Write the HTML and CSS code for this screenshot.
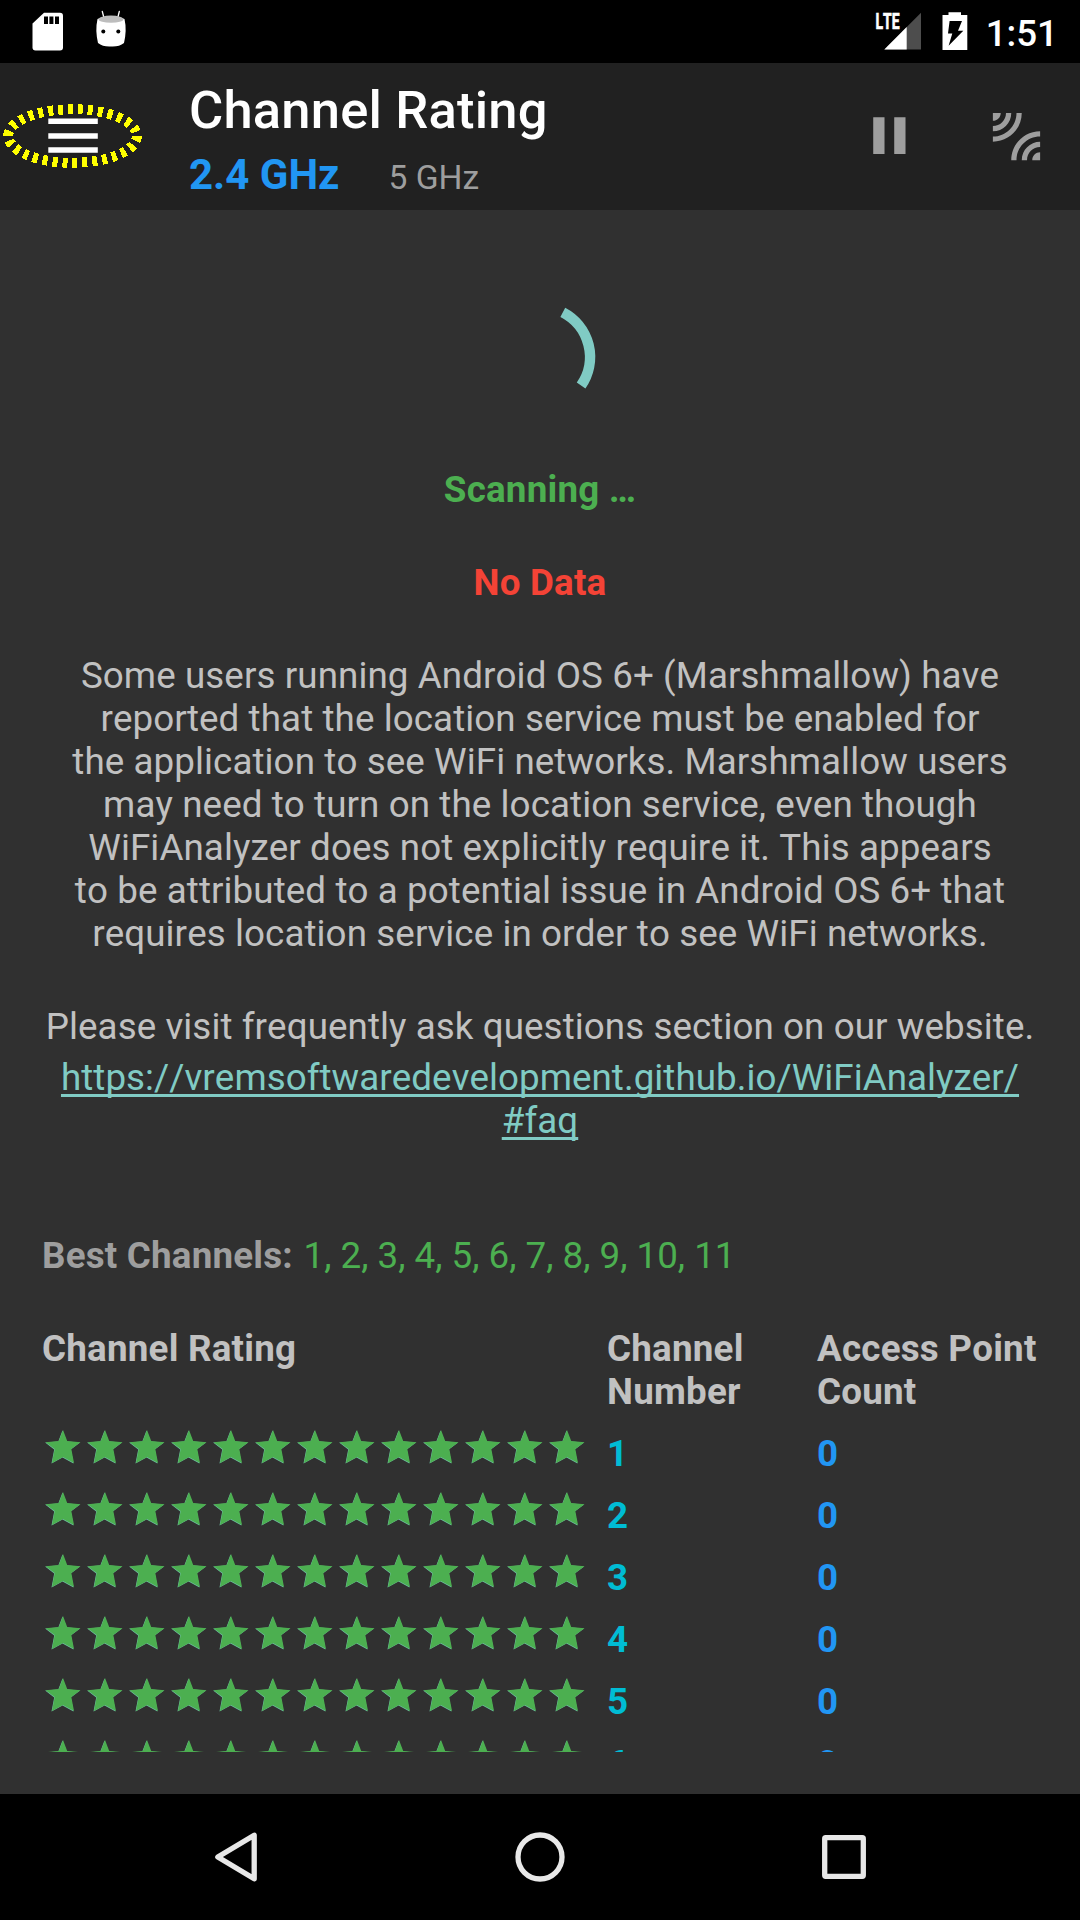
FILE: index.html
```html
<!DOCTYPE html>
<html lang="en">
<head>
<meta charset="utf-8">
<title>Channel Rating</title>
<link rel="stylesheet" href="styles.css">
</head>
<body>
<svg class="defs" width="0" height="0" aria-hidden="true">
  <defs>
    <path id="star-shape" d="M21 5L25.2 16L38.5 17.2L29.3 24L32 38L21 32L10 38L12.7 24L3.6 17.2L16.8 16Z"/>
    <pattern id="star" width="42" height="42" patternUnits="userSpaceOnUse">
      <use href="#star-shape" x="-0.5" y="0.4" fill="#6cc0a4"/>
      <use href="#star-shape" fill="#4caf50"/>
    </pattern>
  </defs>
</svg>
<div class="screen">
  <header class="status-bar">
    <div class="status-left">
      <svg width="32" height="40" viewBox="0 0 32 40">
        <path fill="#fff" d="M12 .7H28Q31 .7 31 3.700V35.500Q31 38.500 28 38.500H3.500Q.500 38.500 .500 35.500V11.500Z"/>
        <path d="M12 4.500h4v7.500h-4zM17.400 4.500h4v7.500h-4zM23 4.500h4v7.500h-4z"/>
      </svg>
      <svg width="32" height="38" viewBox="0 0 32 38">
        <path stroke="#fff" stroke-width="1.300" stroke-linecap="round" d="M7.300 1.500L9 8M24.300 1.500L22.700 8"/>
        <path fill="#fff" d="M2.500 9Q16 3 29.500 9Q32 20 29 33Q24 37 16 36.500Q8 37 3 33Q0 20 2.500 9Z"/>
        <ellipse cx="16" cy="9.200" rx="12.500" ry="3.600" fill="#bdbdbd"/>
        <circle cx="8.300" cy="21.500" r="2"/><circle cx="23.300" cy="21.500" r="2"/>
      </svg>
    </div>
    <div class="status-right">
      <svg class="signal" width="46" height="40" viewBox="0 0 46 40">
        <path fill="#4d4d4d" d="M9.300 38.500L46 1.800V38.500Z"/>
        <path fill="#fff" d="M9.300 38.500L31.700 16.100V38.500Z"/>
        <text class="lte" x="0.500" y="18" textLength="24" lengthAdjust="spacingAndGlyphs">LTE</text>
      </svg>
      <svg width="26" height="40" viewBox="0 0 26 40">
        <path fill="#fff" d="M6.500 1.300H19V4H25.300V39H.500V4H6.500Z"/>
        <path d="M7.600 10H20L16 19.800H21.300L6.600 34.800L10.300 22.500H6Z"/>
      </svg>
      <span class="clock">1:51</span>
    </div>
  </header>

  <nav class="toolbar">
    <svg class="menu" width="147" height="147" viewBox="0 63 147 147">
      <path fill="#fff" d="M48.300 118.600h49.500v5.500H48.300zM48.300 133.200h49.500v5.500H48.300zM48.300 147.300h49.500v5.500H48.300z"/>
      <ellipse class="highlight" cx="72.500" cy="136" rx="64.300" ry="26.800"/>
    </svg>
    <div class="titles">
      <h1>Channel Rating</h1>
      <p><b>2.4 GHz</b><small>5 GHz</small></p>
    </div>
    <div class="actions">
      <svg width="63" height="63" viewBox="0 0 24 24"><path fill="#9e9e9e" d="M5.800 18.700h4.300v-14H5.800zM13.800 4.700v14h4.300v-14z"/></svg>
      <svg width="63" height="63" viewBox="0 0 24 24"><path fill="#9e9e9e" d="M6 3H3v3c1.660 0 3-1.340 3-3zm8 0h-2c0 4.970-4.030 9-9 9v2c6.080 0 11-4.930 11-11zm-4 0H8c0 2.760-2.240 5-5 5v2c3.870 0 7-3.130 7-7zm0 18h2c0-4.970 4.030-9 9-9v-2c-6.070 0-11 4.930-11 11zm8 0h3v-3c-1.660 0-3 1.340-3 3zm-4 0h2c0-2.760 2.240-5 5-5v-2c-3.870 0-7 3.130-7 7z"/></svg>
    </div>
  </nav>

  <main class="content">
    <div class="viewport">
      <svg class="spinner" width="126" height="126" viewBox="-63 -63 126 126">
        <path fill="none" stroke="#80cbc4" stroke-width="10.500" d="M22.800 -44.700A50.300 50.300 0 0 1 41.100 28.600"/>
      </svg>
      <p class="scanning">Scanning …</p>
      <p class="no-data">No Data</p>
      <p class="notice">Some users running Android OS 6+ (Marshmallow) have<br>reported that the location service must be enabled for<br>the application to see WiFi networks. Marshmallow users<br>may need to turn on the location service, even though<br>WiFiAnalyzer does not explicitly require it. This appears<br>to be attributed to a potential issue in Android OS 6+ that<br>requires location service in order to see WiFi networks.</p>
      <p class="visit">Please visit frequently ask questions section on our website.</p>
      <p class="link"><a href="#faq">https://vremsoftwaredevelopment.github.io/WiFiAnalyzer/<br>#faq</a></p>
      <p class="best"><b>Best Channels:</b> <span>1, 2, 3, 4, 5, 6, 7, 8, 9, 10, 11</span></p>
      <div class="row head"><span>Channel Rating</span><span>Channel<br>Number</span><span>Access Point<br>Count</span></div>
      <div class="row"><svg width="546" height="42"><rect width="546" height="42" fill="url(#star)"/></svg><span class="number">1</span><span class="count">0</span></div>
      <div class="row"><svg width="546" height="42"><rect width="546" height="42" fill="url(#star)"/></svg><span class="number">2</span><span class="count">0</span></div>
      <div class="row"><svg width="546" height="42"><rect width="546" height="42" fill="url(#star)"/></svg><span class="number">3</span><span class="count">0</span></div>
      <div class="row"><svg width="546" height="42"><rect width="546" height="42" fill="url(#star)"/></svg><span class="number">4</span><span class="count">0</span></div>
      <div class="row"><svg width="546" height="42"><rect width="546" height="42" fill="url(#star)"/></svg><span class="number">5</span><span class="count">0</span></div>
      <div class="row"><svg width="546" height="42"><rect width="546" height="42" fill="url(#star)"/></svg><span class="number">6</span><span class="count">0</span></div>
    </div>
  </main>

  <footer class="nav-bar">
    <svg width="64" height="64" viewBox="-32 -32 64 64"><path d="M18.200 -21.800V21.800L-18.200 0Z"/></svg>
    <svg width="64" height="64" viewBox="-32 -32 64 64"><circle r="22"/></svg>
    <svg width="64" height="64" viewBox="-32 -32 64 64"><rect x="-19.300" y="-19.300" width="38.600" height="38.600" rx="1"/></svg>
  </footer>
</div>
</body>
</html>
```
FILE: styles.css
```css
* { box-sizing: border-box; margin: 0; padding: 0; }

body {
  background: #303030;
  color: #c1c1c1;
  font-family: Roboto, "Liberation Sans", sans-serif;
  font-size: 36.75px;
  line-height: 43px;
  font-kerning: none;
}

svg { display: block; flex: none; }
.defs { position: absolute; }

.screen {
  width: 1080px;
  height: 1920px;
  display: flex;
  flex-direction: column;
  overflow: hidden;
}

.status-bar {
  height: 63px;
  background: #000;
  display: flex;
  justify-content: space-between;
  padding: 11px 22px 0 32px;
}
.status-left { display: flex; gap: 31px; padding-top: 1px; }
.status-left svg + svg { margin-top: -2px; }
.status-right { display: flex; color: #fff; }
.status-right svg + svg { margin-left: 21px; }
.signal { overflow: visible; }
.clock { margin: 1px 0 0 18px; font-weight: 500; }
.lte { fill: #fff; stroke: #fff; stroke-width: 0.7; font-size: 22px; font-weight: 700; }

.toolbar {
  height: 147px;
  background: #212121;
  display: flex;
}
.menu { width: 147px; }
.highlight {
  fill: none;
  stroke: #ff0;
  stroke-width: 10;
  stroke-dasharray: 5 4.950;
  shape-rendering: crispEdges;
}
.titles { flex: 1; padding: 16px 0 0 42px; white-space: nowrap; }
.titles h1 {
  color: #fff;
  font-size: 52.5px;
  font-weight: 500;
  line-height: 62px;
  letter-spacing: 0.2px;
}
.titles p { color: #2196f3; font-size: 42px; line-height: 49px; margin-top: 9px; }
.titles small { color: #9e9e9e; font-size: 33.6px; margin-left: 49px; }
.actions { display: flex; gap: 64px; padding: 42px 32px 0 0; }

.content { height: 1584px; padding: 0 42px 42px; }
.viewport { height: 1542px; overflow: hidden; text-align: center; white-space: nowrap; }
.spinner { margin: 84px auto 0; }
.scanning { margin-top: 48px; color: #4caf50; font-weight: 700; letter-spacing: 0.2px; }
.no-data { margin-top: 50px; color: #f44336; font-weight: 700; letter-spacing: 0.2px; }
.notice { margin-top: 50px; letter-spacing: 0.09px; }
.visit { margin-top: 50px; letter-spacing: 0.08px; }
.link { margin-top: 8px; letter-spacing: 0.05px; }
.link a {
  color: #80cbc4;
  text-decoration: underline;
  text-decoration-thickness: 2.5px;
  text-underline-offset: 4px;
  text-decoration-skip-ink: none;
}
.best { margin-top: 92px; text-align: left; color: #4caf50; }
.best b { color: #9e9e9e; letter-spacing: 0.2px; }
.best span { margin-left: 1.5px; }

.row {
  height: 62px;
  display: grid;
  grid-template-columns: 565px 210px 1fr;
  text-align: left;
  font-weight: 700;
  letter-spacing: 0.22px;
}
.row.head { height: 98px; margin-top: 50px; }
.row span { padding-top: 7px; }
.row.head span { padding-top: 0; }
.number { color: #00bcd4; }
.count { color: #2196f3; }

.nav-bar {
  height: 126px;
  background: #000;
  display: flex;
  justify-content: center;
  align-items: center;
  gap: 240px;
}
.nav-bar svg {
  fill: none;
  stroke: #e8e8e8;
  stroke-width: 5.3;
  stroke-linejoin: round;
}
```
